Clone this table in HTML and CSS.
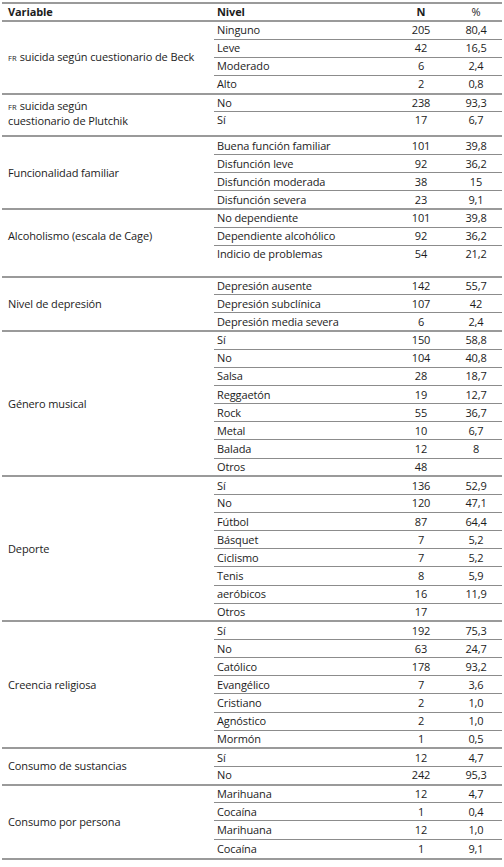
FILE: index.html
```html
<!DOCTYPE html>
<html lang="es">
<head>
<meta charset="utf-8">
<title>Tabla</title>
<link rel="stylesheet" href="styles.css">
</head>
<body>
<div class="page">
<table class="t">
<colgroup><col class="c-var"><col class="c-niv"><col class="c-n"><col class="c-p"></colgroup>
<thead>
<tr><th class="var">Variable</th><th class="niv">Nivel</th><th class="n">N</th><th class="p">%</th></tr>
</thead>
<tbody>
<tr><td class="var" rowspan="4"><span class="fr">FR</span> suicida según cuestionario de Beck</td><td>Ninguno</td><td class="n">205</td><td class="p">80,4</td></tr>
<tr><td>Leve</td><td class="n">42</td><td class="p">16,5</td></tr>
<tr><td>Moderado</td><td class="n">6</td><td class="p">2,4</td></tr>
<tr><td>Alto</td><td class="n">2</td><td class="p">0,8</td></tr>
</tbody>
<tbody>
<tr><td class="var pad7" rowspan="2"><span class="fr">FR</span> suicida según<br>cuestionario de Plutchik</td><td>No</td><td class="n">238</td><td class="p">93,3</td></tr>
<tr class="tall7"><td>Sí</td><td class="n">17</td><td class="p">6,7</td></tr>
</tbody>
<tbody>
<tr><td class="var" rowspan="4">Funcionalidad familiar</td><td>Buena función familiar</td><td class="n">101</td><td class="p">39,8</td></tr>
<tr><td>Disfunción leve</td><td class="n">92</td><td class="p">36,2</td></tr>
<tr><td>Disfunción moderada</td><td class="n">38</td><td class="p">15</td></tr>
<tr><td>Disfunción severa</td><td class="n">23</td><td class="p">9,1</td></tr>
</tbody>
<tbody>
<tr><td class="var pad14" rowspan="3">Alcoholismo (escala de Cage)</td><td>No dependiente</td><td class="n">101</td><td class="p">39,8</td></tr>
<tr><td>Dependiente alcohólico</td><td class="n">92</td><td class="p">36,2</td></tr>
<tr class="tall14"><td>Indicio de problemas</td><td class="n">54</td><td class="p">21,2</td></tr>
</tbody>
<tbody>
<tr><td class="var" rowspan="3">Nivel de depresión</td><td>Depresión ausente</td><td class="n">142</td><td class="p">55,7</td></tr>
<tr><td>Depresión subclínica</td><td class="n">107</td><td class="p">42</td></tr>
<tr><td>Depresión media severa</td><td class="n">6</td><td class="p">2,4</td></tr>
</tbody>
<tbody>
<tr><td class="var" rowspan="8">Género musical</td><td>Sí</td><td class="n">150</td><td class="p">58,8</td></tr>
<tr><td>No</td><td class="n">104</td><td class="p">40,8</td></tr>
<tr><td>Salsa</td><td class="n">28</td><td class="p">18,7</td></tr>
<tr><td>Reggaetón</td><td class="n">19</td><td class="p">12,7</td></tr>
<tr><td>Rock</td><td class="n">55</td><td class="p">36,7</td></tr>
<tr><td>Metal</td><td class="n">10</td><td class="p">6,7</td></tr>
<tr><td>Balada</td><td class="n">12</td><td class="p">8</td></tr>
<tr><td>Otros</td><td class="n">48</td><td class="p"></td></tr>
</tbody>
<tbody>
<tr><td class="var" rowspan="8">Deporte</td><td>Sí</td><td class="n">136</td><td class="p">52,9</td></tr>
<tr><td>No</td><td class="n">120</td><td class="p">47,1</td></tr>
<tr><td>Fútbol</td><td class="n">87</td><td class="p">64,4</td></tr>
<tr><td>Básquet</td><td class="n">7</td><td class="p">5,2</td></tr>
<tr><td>Ciclismo</td><td class="n">7</td><td class="p">5,2</td></tr>
<tr><td>Tenis</td><td class="n">8</td><td class="p">5,9</td></tr>
<tr><td>aeróbicos</td><td class="n">16</td><td class="p">11,9</td></tr>
<tr><td>Otros</td><td class="n">17</td><td class="p"></td></tr>
</tbody>
<tbody>
<tr><td class="var" rowspan="7">Creencia religiosa</td><td>Sí</td><td class="n">192</td><td class="p">75,3</td></tr>
<tr><td>No</td><td class="n">63</td><td class="p">24,7</td></tr>
<tr><td>Católico</td><td class="n">178</td><td class="p">93,2</td></tr>
<tr><td>Evangélico</td><td class="n">7</td><td class="p">3,6</td></tr>
<tr><td>Cristiano</td><td class="n">2</td><td class="p">1,0</td></tr>
<tr><td>Agnóstico</td><td class="n">2</td><td class="p">1,0</td></tr>
<tr><td>Mormón</td><td class="n">1</td><td class="p">0,5</td></tr>
</tbody>
<tbody>
<tr><td class="var" rowspan="2">Consumo de sustancias</td><td>Sí</td><td class="n">12</td><td class="p">4,7</td></tr>
<tr><td>No</td><td class="n">242</td><td class="p">95,3</td></tr>
</tbody>
<tbody>
<tr><td class="var" rowspan="4">Consumo por persona</td><td>Marihuana</td><td class="n">12</td><td class="p">4,7</td></tr>
<tr><td>Cocaína</td><td class="n">1</td><td class="p">0,4</td></tr>
<tr><td>Marihuana</td><td class="n">12</td><td class="p">1,0</td></tr>
<tr class="tall9"><td>Cocaína</td><td class="n">1</td><td class="p">9,1</td></tr>
</tbody>
</table>
</div>
</body>
</html>
```
FILE: styles.css
```css
html, body {
  margin: 0;
  padding: 0;
  background: #ffffff;
}

.page {
  padding: 2px 2px 0 2px;
}

.t {
  width: 500px;
  border-collapse: collapse;
  table-layout: fixed;
  font-family: "Open Sans", "DejaVu Sans", sans-serif;
  font-size: 11px;
  letter-spacing: -0.12px;
  color: #1c1c1c;
}

.c-var { width: 212px; }
.c-niv { width: 178px; }
.c-n { width: 58px; }
.c-p { width: 52px; }

.t th {
  height: 16px;
  padding: 0 0 0 3px;
  text-align: left;
  font-weight: bold;
  border-top: 2px solid #9a9a9a;
  border-bottom: 2px solid #9a9a9a;
  vertical-align: middle;
  line-height: 14px;
}

.t th.var { padding-left: 6px; }
.t th.n, .t th.p { text-align: center; padding-left: 0; }
.t th.p { font-weight: normal; }

.t tr { height: 18.15px; }

.t td {
  padding: 0 0 0 3px;
  line-height: 14px;
  vertical-align: middle;
  border-bottom: 1px solid #8c8c8c;
  white-space: nowrap;
}

.t td.var {
  padding-left: 6px;
  border-bottom: 2px solid #9a9a9a;
}

.t tbody tr:last-child td {
  border-bottom: 2px solid #9a9a9a;
}

.t td.n, .t td.p {
  text-align: center;
  padding-left: 0;
}

.t td.pad7 { padding-bottom: 4px; }
.t td.pad14 { padding-bottom: 14px; }

.t tr.tall7 { height: 24.5px; }
.t tr.tall9 { height: 20px; }
.t tr.tall14 { height: 31.5px; }
.t tr.tall7 td, .t tr.tall14 td { vertical-align: top; padding-top: 1px; }

.fr {
  font-size: 7.5px;
  letter-spacing: 0.2px;
}
```
